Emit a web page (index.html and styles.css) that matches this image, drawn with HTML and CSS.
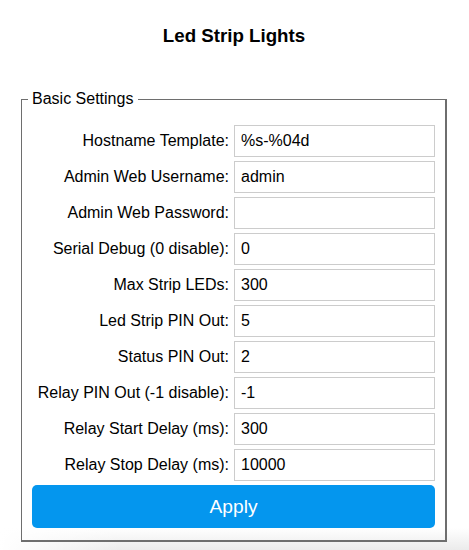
FILE: index.html
```html
<!DOCTYPE html>
<html>
<head>
<meta charset="utf-8">
<title>Led Strip Lights</title>
<link rel="stylesheet" href="styles.css">
</head>
<body>
<div class="page">
  <h3 class="title">Led Strip Lights</h3>
  <form class="form">
    <fieldset class="group">
      <legend class="legend">Basic Settings</legend>
      <div class="rows">
        <label class="label">Hostname Template:</label><input class="field" type="text" value="%s-%04d">
        <label class="label">Admin Web Username:</label><input class="field" type="text" value="admin">
        <label class="label">Admin Web Password:</label><input class="field" type="password" value="">
        <label class="label">Serial Debug (0 disable):</label><input class="field" type="text" value="0">
        <label class="label">Max Strip LEDs:</label><input class="field" type="text" value="300">
        <label class="label">Led Strip PIN Out:</label><input class="field" type="text" value="5">
        <label class="label">Status PIN Out:</label><input class="field" type="text" value="2">
        <label class="label">Relay PIN Out (-1 disable):</label><input class="field" type="text" value="-1">
        <label class="label">Relay Start Delay (ms):</label><input class="field" type="text" value="300">
        <label class="label">Relay Stop Delay (ms):</label><input class="field" type="text" value="10000">
      </div>
      <button class="apply" type="button">Apply</button>
    </fieldset>
  </form>
</div>
</body>
</html>
```
FILE: styles.css
```css
html, body {
  margin: 0;
  padding: 0;
}
body {
  font-family: "Liberation Sans", Arial, sans-serif;
  font-size: 16px;
  color: #000;
}
.page {
  min-height: 550px;
  box-sizing: border-box;
  padding: 25px 22px 0 21px;
  background:
    linear-gradient(to right, rgba(255,255,255,1) 0, rgba(255,255,255,0) 120px),
    linear-gradient(to bottom, #fff 0, #fff 528px, #ebebeb 550px);
}
.title {
  margin: 0;
  font-size: 18.72px;
  font-weight: bold;
  text-align: center;
  line-height: 21px;
}
.form {
  margin: 44px 0 0 0;
}
.group {
  margin: 0;
  padding: 17px 10px 12px 10px;
  border-style: solid;
  border-color: #6e6e6e;
  border-width: 1px 2px 2px 1px;
  min-width: 0;
}
.legend {
  padding: 0 5px 0 4px;
  margin-left: -4px;
  line-height: 18px;
}
.rows {
  display: grid;
  grid-template-columns: 1fr 201px;
  column-gap: 5px;
  row-gap: 4px;
  align-items: center;
}
.label {
  text-align: right;
  white-space: nowrap;
}
.field {
  box-sizing: border-box;
  height: 32px;
  width: 201px;
  margin: 0;
  padding: 0 6px;
  border: 1px solid #cccccc;
  border-radius: 0;
  font-family: "Liberation Sans", Arial, sans-serif;
  font-size: 16px;
  color: #000;
  background: #fff;
  outline: none;
}
.apply {
  display: block;
  width: 100%;
  height: 43px;
  margin: 4px 0 0 0;
  border: 0;
  border-radius: 5px;
  background: #0496ee;
  color: #fff;
  font-family: "Liberation Sans", Arial, sans-serif;
  font-size: 19.2px;
  line-height: 43px;
  padding: 0;
}
```
